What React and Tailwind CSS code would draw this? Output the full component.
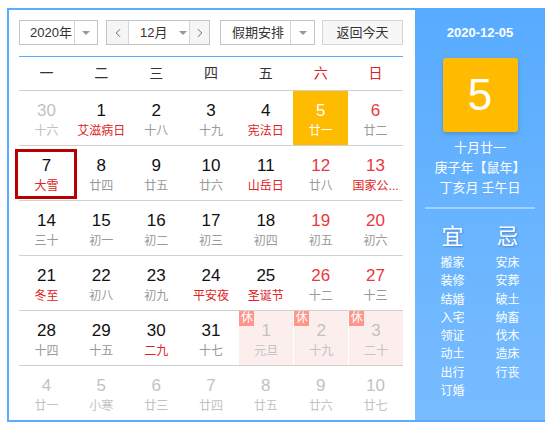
import { ChevronLeft, ChevronRight } from 'lucide-react';

const weekdays = [
  { t: '一' }, { t: '二' }, { t: '三' }, { t: '四' }, { t: '五' }, { t: '六', red: true }, { t: '日', red: true },
];

// kind: 'other' = other month, 'sel' = today, 'hol' = holiday rest day
const weeks = [
  [
    { d: 30, l: '十六', kind: 'other' },
    { d: 1, l: '艾滋病日', lr: true },
    { d: 2, l: '十八' },
    { d: 3, l: '十九' },
    { d: 4, l: '宪法日', lr: true },
    { d: 5, l: '廿一', kind: 'sel' },
    { d: 6, l: '廿二', dr: true },
  ],
  [
    { d: 7, l: '大雪', lr: true, boxed: true },
    { d: 8, l: '廿四' },
    { d: 9, l: '廿五' },
    { d: 10, l: '廿六' },
    { d: 11, l: '山岳日', lr: true },
    { d: 12, l: '廿八', dr: true },
    { d: 13, l: '国家公...', dr: true, lr: true },
  ],
  [
    { d: 14, l: '三十' },
    { d: 15, l: '初一' },
    { d: 16, l: '初二' },
    { d: 17, l: '初三' },
    { d: 18, l: '初四' },
    { d: 19, l: '初五', dr: true },
    { d: 20, l: '初六', dr: true },
  ],
  [
    { d: 21, l: '冬至', lr: true },
    { d: 22, l: '初八' },
    { d: 23, l: '初九' },
    { d: 24, l: '平安夜', lr: true },
    { d: 25, l: '圣诞节', lr: true },
    { d: 26, l: '十二', dr: true },
    { d: 27, l: '十三', dr: true },
  ],
  [
    { d: 28, l: '十四' },
    { d: 29, l: '十五' },
    { d: 30, l: '二九', lr: true },
    { d: 31, l: '十七' },
    { d: 1, l: '元旦', kind: 'hol' },
    { d: 2, l: '十九', kind: 'hol' },
    { d: 3, l: '二十', kind: 'hol' },
  ],
  [
    { d: 4, l: '廿一', kind: 'other' },
    { d: 5, l: '小寒', kind: 'other' },
    { d: 6, l: '廿三', kind: 'other' },
    { d: 7, l: '廿四', kind: 'other' },
    { d: 8, l: '廿五', kind: 'other' },
    { d: 9, l: '廿六', kind: 'other' },
    { d: 10, l: '廿七', kind: 'other' },
  ],
];

const yi = ['搬家', '装修', '结婚', '入宅', '领证', '动土', '出行', '订婚'];
const ji = ['安床', '安葬', '破土', '纳畜', '伐木', '造床', '行丧'];

function Caret() {
  return <span className="block w-0 h-0 border-l-[4px] border-r-[4px] border-t-[4px] border-l-transparent border-r-transparent border-t-[#999]" />;
}

function Cell({ c }) {
  const muted = c.kind === 'other' || c.kind === 'hol';
  const sel = c.kind === 'sel';
  let numColor = 'text-[#111]';
  let lunColor = 'text-[#999]';
  if (c.dr) numColor = 'text-[#e8383d]';
  if (c.lr) lunColor = 'text-[#e02222]';
  if (muted) {
    numColor = 'text-[#c2c2c2]';
    lunColor = 'text-[#c2c2c2]';
  }
  if (sel) {
    numColor = 'text-white';
    lunColor = 'text-white';
  }
  let bg = '';
  if (sel) bg = 'bg-[#ffbb00]';
  if (c.kind === 'hol') bg = 'bg-[#fdeeee] border-l border-white';
  return (
    <div className={`relative flex flex-col items-center pt-[10px] ${bg}`}>
      <span className={`text-[17px] leading-[20px] ${numColor}`}>{c.d}</span>
      <span className={`mt-[2px] text-[12px] leading-[16px] whitespace-nowrap ${lunColor}`}>{c.l}</span>
      {c.kind === 'hol' && (
        <span className="absolute left-0 top-0 w-[15px] h-[15px] bg-[#ff968b] text-white text-[12px] leading-[15px] text-center">休</span>
      )}
      {c.boxed && <span className="absolute top-[3px] left-[-4px] w-[62px] h-[50px] border-[3px] border-[#b80000]" />}
    </div>
  );
}

export default function App() {
  return (
    <div className="w-[555px] h-[431px] bg-white pt-[8px] pl-[7px] font-['Liberation_Sans','Noto_Sans_CJK_SC',sans-serif]">
      <div className="flex w-[538px] h-[414px]">
        {/* calendar */}
        <div className="w-[408px] h-full border-l-2 border-t-2 border-b-2 border-[#5aacff] pl-[10px] pr-[12px] pt-[10px]">
          <div className="flex items-center h-[25px] text-[13px] text-[#333] whitespace-nowrap">
            <div className="flex w-[79px] h-full border border-[#c4c4c4]">
              <span className="flex-1 pl-[10px] leading-[23px]">2020年</span>
              <span className="w-[23px] border-l border-[#d6d6d6] flex items-center justify-center"><Caret /></span>
            </div>
            <div className="flex ml-[8px] w-[104px] h-full border border-[#c4c4c4]">
              <span className="w-[22px] bg-[#f5f5f5] border-r border-[#d6d6d6] flex items-center justify-center text-[#555]">
                <ChevronLeft size={14} strokeWidth={1.5} />
              </span>
              <span className="flex-1 flex items-center pl-[11px] gap-[12px]">
                <span className="leading-[23px]">12月</span>
                <Caret />
              </span>
              <span className="w-[20px] bg-[#f5f5f5] border-l border-[#d6d6d6] flex items-center justify-center text-[#555]">
                <ChevronRight size={14} strokeWidth={1.5} />
              </span>
            </div>
            <div className="flex ml-[10px] w-[95px] h-full border border-[#c4c4c4]">
              <span className="flex-1 pl-[11px] leading-[23px]">假期安排</span>
              <span className="w-[24px] border-l border-[#d6d6d6] flex items-center justify-center"><Caret /></span>
            </div>
            <button className="ml-[7px] w-[81px] h-full border border-[#d6d6d6] bg-[#f7f7f7] text-[13px] text-[#333] leading-[23px]">返回今天</button>
          </div>

          <div className="mt-[11px] h-[35px] border-t border-b border-t-[#5aacff] border-b-[#d0d0d0] grid grid-cols-7 items-center text-[14px]">
            {weekdays.map((w) => (
              <span key={w.t} className={`text-center ${w.red ? 'text-[#e02222]' : 'text-[#333]'}`}>{w.t}</span>
            ))}
          </div>

          {weeks.map((row, i) => (
            <div key={i} className={`grid grid-cols-7 ${i < 5 ? 'h-[55px] border-b border-[#d0d0d0]' : 'h-[54px]'}`}>
              {row.map((c, j) => <Cell key={j} c={c} />)}
            </div>
          ))}
        </div>

        {/* side panel */}
        <div className="w-[130px] h-full flex flex-col items-center bg-gradient-to-b from-[#57abff] to-[#78bcff] border-b-2 border-[#5aacff] text-white font-['Noto_Sans_CJK_SC',sans-serif]">
          <div className="mt-[16px] text-[13px] leading-[18px] font-bold font-['Liberation_Sans',sans-serif]">2020-12-05</div>
          <div className="mt-[16px] w-[75px] h-[74px] rounded-[3px] bg-[#ffbb00] shadow-[0_2px_4px_rgba(0,0,0,0.18)] flex items-center justify-center text-[44px] leading-none font-['Liberation_Sans',sans-serif]">5</div>
          <div className="mt-[5px] text-[13px] leading-[20px] text-center">
            <div>十月廿一</div>
            <div>庚子年【鼠年】</div>
            <div>丁亥月 壬午日</div>
          </div>
          <div className="mt-[10px] w-[110px] h-[2px] bg-white/40" />
          <div className="mt-[10px] flex w-[110px]">
            {[{ t: '宜', list: yi }, { t: '忌', list: ji }].map((col) => (
              <div key={col.t} className="flex-1 flex flex-col items-center">
                <div className="text-[22px] leading-[30px] [text-shadow:1px_1px_2px_rgba(0,40,120,0.35)]">{col.t}</div>
                <div className="mt-[4px] text-[12px] leading-[18.3px] text-center">
                  {col.list.map((x) => <div key={x}>{x}</div>)}
                </div>
              </div>
            ))}
          </div>
        </div>
      </div>
    </div>
  );
}
